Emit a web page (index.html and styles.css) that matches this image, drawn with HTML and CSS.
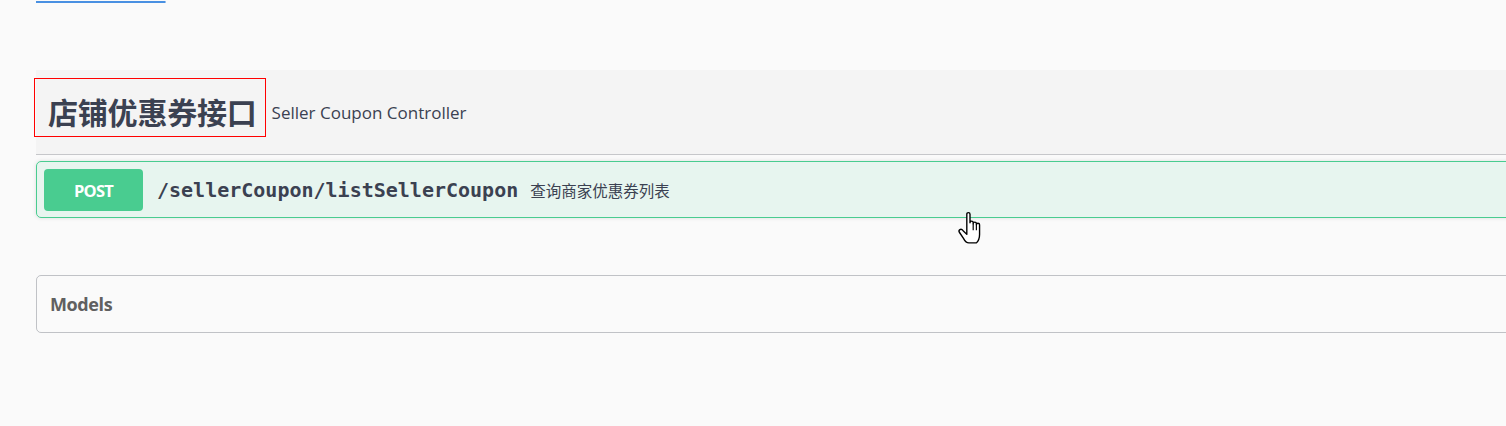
FILE: index.html
```html
<!DOCTYPE html>
<html lang="zh">
<head>
<meta charset="utf-8">
<title>Swagger</title>
<link rel="stylesheet" href="styles.css">
</head>
<body>
<div class="page">
  <div class="info"><a class="tos" href="#">Terms of service</a></div>
  <section class="tag-section">
    <h3 class="tag-head">
      <span class="tag-title">店铺优惠券接口</span>
      <small class="tag-desc">Seller Coupon Controller</small>
    </h3>
    <div class="opblock">
      <span class="method">POST</span>
      <span class="path">/sellerCoupon/listSellerCoupon</span>
      <span class="summary">查询商家优惠券列表</span>
    </div>
  </section>
  <section class="models">
    <h4 class="models-title">Models</h4>
  </section>
</div>
<svg class="cursor" width="28" height="34" viewBox="0 0 26 32">
  <path d="M10 3 Q10 1.5 11.5 1.5 Q13 1.5 13 3 V11 Q13 9.5 14.5 9.5 Q16 9.5 16 11 V12 Q16 10.5 17.5 10.5 Q19 10.5 19 12 V13 Q19 11.5 20.5 11.5 Q22 11.5 22 13 V22 Q22 27 19 30 H12 Q9 30 7 26 L3 20 Q2 18.5 3.5 17.5 Q5 16.5 6.5 18.5 L10 22 Z" fill="#fff" stroke="#000" stroke-width="1.3" stroke-linejoin="round"/>
  <path d="M16 12 V18 M19 13 V18" fill="none" stroke="#000" stroke-width="1.1"/>
</svg>
</body>
</html>
```
FILE: styles.css
```css
html, body {
  margin: 0;
  padding: 0;
}
body {
  background: #fafafa;
  font-family: "Open Sans", "Noto Sans CJK SC", sans-serif;
  color: #3b4151;
  overflow: hidden;
  position: relative;
  height: 426px;
}
.page {
  padding-left: 36px;
  margin-right: -12px;
}
.info {
  display: flow-root;
  height: 70px;
}
.tos {
  display: block;
  width: max-content;
  margin-top: -17px;
  font-size: 17px;
  line-height: 22px;
  color: #4990e2;
  text-decoration: underline;
  text-decoration-color: #4990e2;
  text-decoration-thickness: 2px;
}
.tag-head {
  margin: 0;
  height: 85px;
  box-sizing: border-box;
  display: flex;
  align-items: center;
  background: #f4f4f4;
  border-bottom: 1px solid #c6c7ca;
  font-weight: normal;
}
.tag-title {
  box-sizing: border-box;
  height: 59px;
  margin-left: -2px;
  margin-bottom: 10px;
  padding: 0 8px 5px 13px;
  border: 1px solid #ff0000;
  display: flex;
  align-items: flex-end;
  font-family: "Noto Sans CJK SC", sans-serif;
  font-weight: 700;
  font-size: 30px;
  line-height: 40px;
  letter-spacing: -0.2px;
  color: #3b4151;
}
.tag-desc {
  margin-left: 6px;
  font-size: 17px;
  color: #3b4151;
}
.opblock {
  margin-top: 6px;
  height: 57px;
  box-sizing: border-box;
  display: flex;
  align-items: center;
  padding: 0 7px;
  border: 1px solid #49cc90;
  border-radius: 5px;
  background: rgba(73, 204, 144, 0.1);
  box-shadow: 0 0 4px rgba(0, 0, 0, 0.12);
}
.method {
  width: 99px;
  height: 42px;
  margin-top: 1px;
  display: flex;
  align-items: center;
  justify-content: center;
  background: #49cc90;
  border-radius: 4px;
  color: #fff;
  font-family: "Open Sans", sans-serif;
  font-weight: 700;
  font-size: 16.5px;
  letter-spacing: -0.8px;
}
.path {
  margin-left: 14px;
  font-family: "DejaVu Sans Mono", monospace;
  font-weight: 700;
  font-size: 20px;
  color: #3b4151;
}
.summary {
  margin-left: 12px;
  font-family: "Noto Sans CJK SC", sans-serif;
  font-size: 15.5px;
  color: #3b4151;
}
.models {
  margin-top: 57px;
  height: 58px;
  box-sizing: border-box;
  border: 1px solid rgba(59, 65, 81, 0.3);
  border-radius: 5px;
  display: flex;
  align-items: center;
  padding-left: 13px;
}
.models-title {
  margin: 0;
  font-family: "Open Sans", sans-serif;
  font-weight: 700;
  font-size: 18px;
  letter-spacing: -0.4px;
  color: #606060;
}
.cursor {
  position: absolute;
  left: 956px;
  top: 211px;
}
```
